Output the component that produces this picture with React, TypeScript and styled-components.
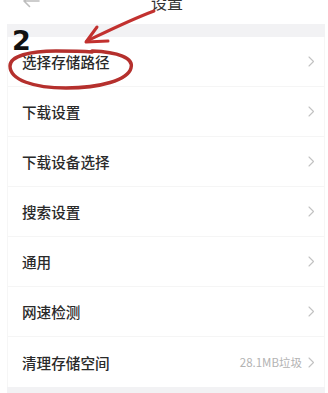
import { createGlobalStyle } from "styled-components";
import styled from "styled-components";

const GlobalStyle = createGlobalStyle`
  html, body {
    margin: 0;
    padding: 0;
    background: #ffffff;
  }
  body {
    font-family: "Noto Sans CJK SC", "Noto Sans", sans-serif;
  }
`;

type Item = {
  label: string;
  extra?: string;
};

const items: Item[] = [
  { label: "选择存储路径" },
  { label: "下载设置" },
  { label: "下载设备选择" },
  { label: "搜索设置" },
  { label: "通用" },
  { label: "网速检测" },
  { label: "清理存储空间", extra: "28.1MB垃圾" },
];

export default function App() {
  return (
    <>
      <GlobalStyle />
      <Page>
        <Header>
          <BackButton>
            <svg width="18" height="14" viewBox="0 0 18 14" fill="none">
              <path
                d="M17 7H2M7.5 1.5L2 7l5.5 5.5"
                stroke="#bdbdbd"
                strokeWidth="1.6"
                strokeLinecap="round"
                strokeLinejoin="round"
              />
            </svg>
          </BackButton>
          <Title>设置</Title>
        </Header>
        <Band />
        <List>
          {items.map((item) => (
            <Row key={item.label}>
              <Label>{item.label}</Label>
              <Right>
                {item.extra && <Extra>{item.extra}</Extra>}
                <Chevron />
              </Right>
            </Row>
          ))}
        </List>
        <Band />
        <Annotation />
      </Page>
    </>
  );
}

const Chevron = () => (
  <svg width="7" height="11" viewBox="0 0 7 11" fill="none">
    <path
      d="M1 1l4.5 4.5L1 10"
      stroke="#c2c2c2"
      strokeWidth="1.1"
      strokeLinecap="round"
      strokeLinejoin="round"
    />
  </svg>
);

// hand-drawn marks on top of the screenshot
const Annotation = () => (
  <Overlay width="328" height="393" viewBox="0 0 328 393" fill="none">
    <path
      d="M154 11 C130 20 110 30 87 41"
      stroke="#c2312f"
      strokeWidth="3"
      strokeLinecap="round"
    />
    <path
      d="M97 27 L86 42 L108 41"
      stroke="#c2312f"
      strokeWidth="3"
      strokeLinecap="round"
      strokeLinejoin="round"
    />
    <path
      d="M92 51 C118 52 134 58 131 68 C128 80 100 88 66 88 C34 88 10 80 10 66 C10 56 30 51 56 51 C70 51 80 51 92 52"
      stroke="#b5302d"
      strokeWidth="3.4"
      strokeLinecap="round"
    />
    <Number x="12" y="50">
      2
    </Number>
  </Overlay>
);

const Page = styled.div`
  position: relative;
  width: 328px;
  height: 393px;
  overflow: hidden;
  background: #ffffff;
`;

const Header = styled.div`
  position: relative;
  height: 24px;
  display: flex;
  align-items: flex-end;
  justify-content: center;
  padding-bottom: 13px;
  box-sizing: border-box;
`;

const BackButton = styled.div`
  position: absolute;
  left: 22px;
  top: -6px;
  display: flex;
`;

const Title = styled.div`
  font-size: 16px;
  line-height: 18px;
  color: #333333;
  margin-left: 6px;
`;

const Band = styled.div`
  height: 13px;
  margin: 0 3px 0 7px;
  background: #f2f2f4;
`;

const List = styled.div`
  margin: 0 3px 0 7px;
  display: flex;
  flex-direction: column;
  border-left: 1px solid #f6f6f6;
  border-right: 1px solid #f6f6f6;
`;

const Row = styled.div`
  height: 50px;
  display: flex;
  align-items: center;
  justify-content: space-between;
  padding: 0 9px 0 14px;
  border-bottom: 1px solid #f5f5f5;
  box-sizing: border-box;
  &:last-child {
    border-bottom: none;
  }
`;

const Label = styled.span`
  font-size: 14.6px;
  font-weight: 500;
  color: #2a2a2a;
`;

const Right = styled.div`
  display: flex;
  align-items: center;
  gap: 6px;
`;

const Extra = styled.span`
  font-size: 11.5px;
  color: #b3b3b3;
`;

const Overlay = styled.svg`
  position: absolute;
  left: 0;
  top: 0;
  pointer-events: none;
`;

const Number = styled.text`
  font-family: "DejaVu Sans", "Liberation Sans", sans-serif;
  font-weight: 700;
  font-size: 27px;
  fill: #111111;
`;
